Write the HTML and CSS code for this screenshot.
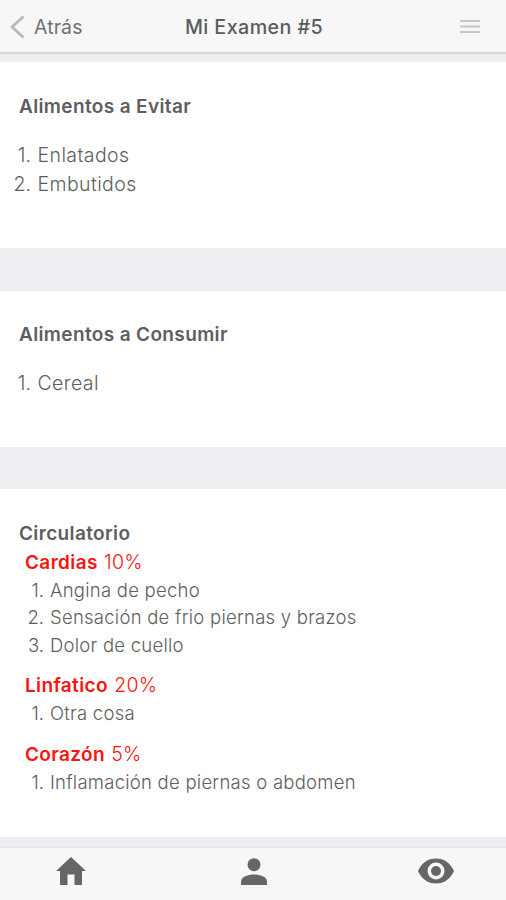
FILE: index.html
```
<!DOCTYPE html>
<html lang="es">
<head>
<meta charset="utf-8">
<title>Mi Examen #5</title>
<link rel="stylesheet" href="styles.css">
</head>
<body>
<div class="app">
  <header class="navbar">
    <a class="back"><svg class="chevron" viewBox="0 0 15 24"><path d="M13.500 1.500 2 12l11.500 10.500"/></svg><span>Atrás</span></a>
    <h1>Mi Examen #5</h1>
    <svg class="menu" viewBox="0 0 20 15"><path d="M0 2h20M0 7.500h20M0 13h20"/></svg>
  </header>
  <main>
    <section class="card avoid">
      <h2>Alimentos a Evitar</h2>
      <ol class="foods"><li>Enlatados</li><li>Embutidos</li></ol>
    </section>
    <section class="card consume">
      <h2>Alimentos a Consumir</h2>
      <ol class="foods"><li>Cereal</li></ol>
    </section>
    <section class="card system">
      <h2>Circulatorio</h2>
      <h3><b>Cardias</b> 10%</h3>
      <ol class="findings"><li>Angina de pecho</li><li>Sensación de frio piernas y brazos</li><li>Dolor de cuello</li></ol>
      <h3><b>Linfatico</b> 20%</h3>
      <ol class="findings"><li>Otra cosa</li></ol>
      <h3><b>Corazón</b> 5%</h3>
      <ol class="findings"><li>Inflamación de piernas o abdomen</li></ol>
    </section>
  </main>
  <nav class="tabs">
    <a><svg class="home" viewBox="0 0 30 28"><path d="M15 0 0 14h4v14h7.500V17.500h7V28H26V14h4Z"/></svg></a>
    <a><svg class="person" viewBox="0 0 26 27"><circle cx="13" cy="6.700" r="6.500"/><path d="M0 27v-3.500C0 19 7 16.500 13 16.500S26 19 26 23.500V27Z"/></svg></a>
    <a><svg class="eye" viewBox="0 0 36 26"><path fill-rule="evenodd" d="M18 .5C10 .5 3.500 5 0 13c3.500 8 10 12.500 18 12.500S32.500 21 36 13C32.500 5 26 .5 18 .5ZM18 4.500a8.500 8.500 0 1 1 0 17 8.500 8.500 0 0 1 0-17Z"/><circle cx="18" cy="13" r="5"/></svg></a>
  </nav>
</div>
</body>
</html>
```
FILE: styles.css
```
* { box-sizing: border-box; }
body {
  margin: 0;
  font-family: Inter, "Liberation Sans", sans-serif;
  color: #5e5e5e;
  background: #eeeef2;
}
.app { display: flex; flex-direction: column; height: 900px; overflow: hidden; }
h1, h2, h3, ol { margin: 0; padding: 0; }
.navbar {
  display: grid;
  grid-template-columns: 1fr auto 1fr;
  align-items: center;
  flex: none;
  height: 54px;
  padding: 0 26px 0 10px;
  background: #f7f7f7;
  border-bottom: 2px solid #d9d9db;
}
.back { display: flex; align-items: center; gap: 9px; font-size: 19.500px; letter-spacing: 0.1px; color: #707070; padding-top: 2px; }
.chevron { width: 15px; height: 24px; fill: none; stroke: #b8b8b8; stroke-width: 2.800; }
h1 { font-size: 19.700px; font-weight: 500; letter-spacing: 0.420px; color: #5c5c5c; padding-top: 2px; margin-left: 18px; }
.menu { width: 20px; height: 15px; justify-self: end; stroke: #c6c6c6; stroke-width: 2; margin-top: 1px; }
main { flex: 1; padding-top: 8px; }
.card { background: #fff; padding-left: 19px; }
.avoid { height: 186px; padding-top: 30px; margin-bottom: 43px; }
.consume { height: 156px; padding-top: 29px; margin-bottom: 42px; }
.system { height: 348px; padding-top: 30px; }
h2 { font-size: 19px; line-height: 30px; font-weight: 600; letter-spacing: 0.360px; color: #5e5e5e; }
.foods { margin: 19px 0 0 -10px; font-size: 19.500px; font-weight: 300; letter-spacing: 0.400px; line-height: 29px; }
.system h2 { height: 29px; }
ol { list-style: none; counter-reset: row; }
li { display: flex; gap: 6px; counter-increment: row; white-space: nowrap; }
li::before { content: counter(row) "."; width: 22px; text-align: right; letter-spacing: 0; }
.foods li { gap: 6.500px; }
h3 { height: 29px; font-size: 19.500px; line-height: 28px; font-weight: 300; letter-spacing: 0.300px; word-spacing: 0.500px; color: #fa1410; padding-left: 6px; }
h3 b { font-size: 19px; font-weight: 600; letter-spacing: 0.360px; }
.findings { font-size: 18.500px; line-height: 27.300px; font-weight: 300; letter-spacing: 0.250px; margin: 0 0 12.300px 3px; }
.tabs { display: grid; grid-template-columns: 142px 1fr 140px; flex: none; height: 53px; background: #f7f7f7; border-top: 1px solid #e5e5e7; }
.tabs a { display: flex; justify-content: center; padding-top: 9px; }
.tabs svg { fill: #666; }
.home { width: 30px; height: 28px; }
.person { width: 26px; height: 27px; margin-top: 1px; }
.eye { width: 36px; height: 26px; margin-top: 1px; }
```
